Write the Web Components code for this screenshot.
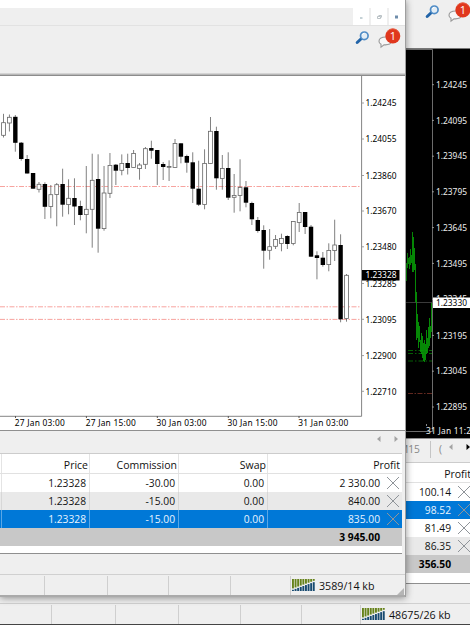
<!DOCTYPE html>
<html lang="en">
<head>
<meta charset="utf-8">
<title>Terminal</title>
<style>
  html, body {
    margin: 0;
    width: 470px;
    height: 625px;
    overflow: hidden;
    background: #efefef;
    font-family: "Open Sans", "Noto Sans", sans-serif;
    font-size: 10.25px;
    color: #111;
  }
</style>
</head>
<body>
<trade-desktop></trade-desktop>

<script>
class TradeDesktop extends HTMLElement {
  constructor() {
    super();
    this.attachShadow({ mode: 'open' }).innerHTML = `
      <style>
        :host {
          display: block;
          position: relative;
          width: 470px;
          height: 625px;
          overflow: hidden;
        }
        terminal-window { position: absolute; top: 0; left: 0; }
        .back { width: 470px; height: 625px; }
        .front {
          width: 406px;
          height: 597px;
          box-shadow: 0 1px 7px rgba(0, 0, 0, .42);
        }
        .shift { margin-left: 406px; }
        .tools { display: flex; justify-content: flex-end; }
        .front .tools { height: 47px; padding: 1px 4px 0 0; box-sizing: border-box; }
        .back .tools { height: 48px; margin-right: -66px; padding-right: 66px; }
        .edge { height: 3px; background: linear-gradient(#d4d4d4 33%, #b8b8b8 33% 66%, #8c8c8c 66%); }
        .back .edge { height: 1px; background: #777; }
        .pane { border: solid #ccc; border-width: 1px 0 0; background: #fff; }
        .front .pane { margin-right: 3px; height: 99px; border-bottom: 1px solid #8f8f8f; }
        .back .pane { height: 120px; border-bottom: 1px solid #8f8f8f; }
        .grow { flex: 1; }
        .grip { position: absolute; right: 1px; bottom: 2px; display: block; }
      </style>
      <terminal-window class="back">
        <div class="tools"><tool-icons style="margin: 1px -1px 0 0"></tool-icons></div>
        <div class="edge"></div>
        <mini-chart class="shift"></mini-chart>
        <tab-strip class="shift" kind="dark"></tab-strip>
        <div class="pane shift">
          <trade-row kind="head" narrow cells="Profit"></trade-row>
          <trade-row narrow closable cells="100.14"></trade-row>
          <trade-row kind="selected" narrow closable cells="98.52"></trade-row>
          <trade-row narrow closable cells="81.49"></trade-row>
          <trade-row kind="alt" narrow closable cells="86.35"></trade-row>
          <trade-row kind="total" narrow cells="356.50"></trade-row>
        </div>
        <div class="grow"></div>
        <status-bar stops="52,64,63,62,61,59" style="border-bottom: 1px solid #444">48675/26 kb</status-bar>
      </terminal-window>
      <terminal-window class="front">
        <title-bar></title-bar>
        <div class="tools"><tool-icons></tool-icons></div>
        <div class="edge"></div>
        <candle-chart></candle-chart>
        <tab-strip></tab-strip>
        <div class="pane">
          <trade-row kind="head" cells="Price|Commission|Swap|Profit"></trade-row>
          <trade-row closable cells="1.23328|-30.00|0.00|2 330.00"></trade-row>
          <trade-row kind="alt" closable cells="1.23328|-15.00|0.00|840.00"></trade-row>
          <trade-row kind="selected" closable cells="1.23328|-15.00|0.00|835.00"></trade-row>
          <trade-row kind="total" cells="|||3 945.00"></trade-row>
        </div>
        <div class="grow"></div>
        <status-bar stops="45,63,61,62,60" style="border-bottom: 2px solid #aaa">3589/14 kb</status-bar>
        <svg class="grip" width="7" height="7"><path d="M7 0V7H0z" fill="#b5b5b5"/></svg>
      </terminal-window>`;
  }
}

class TerminalWindow extends HTMLElement {
  constructor() {
    super();
    this.attachShadow({ mode: 'open' }).innerHTML = `
      <style>
        :host {
          display: flex;
          flex-direction: column;
          background: #efefef;
          box-sizing: border-box;
        }
        :host(.front) { border-right: 1px solid #9f9f9f; }
      </style>
      <slot></slot>`;
  }
}

class TitleBar extends HTMLElement {
  constructor() {
    super();
    this.attachShadow({ mode: 'open' }).innerHTML = `
      <style>
        :host {
          display: flex;
          justify-content: flex-end;
          gap: 2px;
          height: 17px;
          border-top: 8px solid #fff;
          border-bottom: 1px solid #e2e2e2;
        }
        span { width: 16px; background: #fff; }
        svg { display: block; }
      </style>
      <span><svg width="16" height="17"><path d="M7 10h2.5" stroke="#8ba4ad"/></svg></span>
      <span><svg width="16" height="17"><path d="M6.5 8.5h3v2h-3zM7.5 7.5h3v2" fill="none" stroke="#a9b3b8" stroke-width=".8"/></svg></span>
      <span><svg width="16" height="17"><path d="M6 7.5h3v3h-3z" fill="#6f8dab"/></svg></span>`;
  }
}

class ToolIcons extends HTMLElement {
  constructor() {
    super();
    this.attachShadow({ mode: 'open' }).innerHTML = `
      <style>
        :host { display: block; width: 46px; height: 22px; }
        svg { display: block; overflow: visible; }
        text { font: 11px "Open Sans", sans-serif; fill: #fff; }
      </style>
      <svg width="46" height="22">
        <path d="M7 11L2.2 15.5" stroke="#2264a8" stroke-width="3" stroke-linecap="round"/>
        <circle cx="9.3" cy="8.8" r="3.8" fill="#e3edf5" stroke="#4f8cc6" stroke-width="1.7"/>
        <path d="M7 8q.6-1.6 2.3-1.7" fill="none" stroke="#fff"/>
        <path d="M31 10c-4 0-7 1.6-7 4.2 0 1.5.8 2.5 2 3l0 3 3-2.4c5 .3 7.5-1 7.5-3.6" fill="#f7f7f7" stroke="#999" stroke-width="1.1"/>
        <circle cx="37.8" cy="9" r="7.5" fill="#e0371d"/>
        <path d="M31.6 5.5a7 7 0 0 1 12.4 0" fill="none" stroke="#e96a50" stroke-width=".8"/>
        <text x="37.8" y="13" text-anchor="middle">1</text>
      </svg>`;
  }
}

class TabStrip extends HTMLElement {
  constructor() {
    super();
    const dark = this.getAttribute('kind') === 'dark';
    this.attachShadow({ mode: 'open' }).innerHTML = `
      <style>
        :host {
          display: flex;
          align-items: center;
          height: ${dark ? 24 : 23}px;
          padding-right: ${dark ? 0 : 5}px;
          box-sizing: border-box;
          border-top: 1px solid #8f8f8f;
          overflow: hidden;
          color: #888;
          justify-content: flex-end;
        }
        .tab { flex: 1; height: 17px; line-height: 16px; margin: 0 0 3px -7px; border-right: 1px solid #c5c5c5; }
        .next { width: 17px; height: 17px; line-height: 14px; padding-left: 8px; box-sizing: border-box; overflow: hidden; }
        svg { display: block; margin-top: -7px; }
      </style>
      ${dark ? '<span class="tab">M15</span><span class="next">(</span>' : ''}
      <svg width="${dark ? 22 : 24}" height="8">
        <path d="M4.5 1v6L1 4z" fill="#a3a3a3"/>
        <path d="M18.5 1v6L22 4z" fill="${dark ? '#000' : '#a3a3a3'}"/>
      </svg>`;
  }
}

class TradeRow extends HTMLElement {
  constructor() {
    super();
    const kind = this.getAttribute('kind') || '';
    const narrow = this.hasAttribute('narrow');
    const cells = this.getAttribute('cells').split('|');
    const cross = '<svg width="14" height="14"><path d="M1 1l12 12M13 1L1 13" stroke="#8f9499" fill="none"/></svg>';
    this.attachShadow({ mode: 'open' }).innerHTML = `
      <style>
        :host {
          display: grid;
          grid-template-columns: ${narrow ? '1fr' : '2px 88px 89px 89px 1fr'};
          height: 18px;
          line-height: 18px;
          background: #fff;
          color: #111;
          --rule: #e4e4e4;
          overflow: hidden;
        }
        :host([kind=head]) {
          height: 20px;
          line-height: 22px;
          box-sizing: border-box;
          border-bottom: 1px solid #e1e1e1;
          font-size: 10.5px;
        }
        :host([kind=alt]) { background: #e9e9e9; --rule: #d7d7d7; }
        :host([kind=selected]) { background: #0078d7; color: #e9f4ff; --rule: #5aa7e6; }
        :host([kind=total]) { background: #c8c8c8; font-weight: 700; color: #000; --rule: transparent; }
        div {
          display: flex;
          justify-content: flex-end;
          padding-right: 3px;
          border-right: 1px solid var(--rule);
          white-space: pre;
        }
        :host([kind=head]) div { padding-right: 1px; }
        .first { padding: 0; }
        div:last-child { border: 0; padding-right: ${narrow ? 19 : 22}px; }
        :host([kind=head]) div:last-child { padding-right: ${narrow ? 0 : 2}px; margin-right: ${narrow ? -1 : 0}px; }
        :host([closable]) div:last-child { padding-right: ${narrow ? 0 : 2}px; margin-right: ${narrow ? -1 : 0}px; gap: 6px; align-items: center; }
      </style>
      ${narrow ? '' : '<div class="first"></div>'}
      ${cells.map((text, i) => `<div><span>${text}</span>${i === cells.length - 1 && this.hasAttribute('closable') ? cross : ''}</div>`).join('')}`;
  }
}

class StatusBar extends HTMLElement {
  constructor() {
    super();
    const stops = this.getAttribute('stops').split(',');
    this.attachShadow({ mode: 'open' }).innerHTML = `
      <style>
        :host {
          display: flex;
          height: 19px;
          padding-top: 1px;
          border-top: 1px solid #d0d0d0;
          line-height: 21px;
          font-size: 10.7px;
        }
        i { border-right: 1px solid #cfcfcf; box-sizing: border-box; }
        traffic-meter { margin: 3px 4px 0 1px; }
      </style>
      ${stops.map(w => `<i style="width: ${w}px"></i>`).join('')}
      <traffic-meter></traffic-meter>
      <slot></slot>`;
  }
}

class TrafficMeter extends HTMLElement {
  constructor() {
    super();
    let bars = '';
    for (let i = 0; i < 9; i++) {
      const x = i * 2.6;
      const split = 9.8 - i * 0.95;
      bars += `<rect x="${x}" y="0" width="1.9" height="${split - .4}" fill="#66821a"/>`;
      bars += `<rect x="${x}" y="${split + 1}" width="1.9" height="${11 - split}" fill="#174a70"/>`;
    }
    this.attachShadow({ mode: 'open' }).innerHTML = `
      <style>:host, svg { display: block; }</style>
      <svg width="23" height="12">${bars}</svg>`;
  }
}

// high, body top, body bottom, low, 1 for a falling candle
const CANDLES = [
  [113.8, 122.7, 135.3, 137.5, 0], [114.5, 117.3, 123, 131.5, 0], [115, 116.8, 142.8, 151.7, 1],
  [142, 142.7, 159, 160.7, 1], [155, 159, 173.5, 173.5, 1], [173, 173, 188.7, 188.7, 1],
  [182, 184.3, 189.3, 192.5, 0], [182.3, 184, 206.8, 219, 1], [185, 194.7, 206.5, 218.3, 0],
  [183, 184.7, 194.6, 226.3, 0], [168.7, 184, 204.7, 216.7, 1], [179.3, 198.3, 204.6, 214.3, 0],
  [178.3, 198, 206.5, 225, 1], [200.7, 206, 215, 220.3, 1], [166, 209.3, 214.6, 233.3, 0],
  [153.7, 180.3, 209.3, 247.7, 0], [154.3, 179, 228.7, 252.7, 1], [166, 193, 228.6, 230.7, 0],
  [153, 165.4, 193.3, 198, 0], [164, 164.7, 170.7, 185, 1], [154.4, 163.4, 170.3, 175.3, 0],
  [153.7, 163, 168, 174.5, 1], [150, 153.4, 167.6, 167.7, 0], [163, 165, 168.6, 179.7, 0],
  [147, 148.7, 164.3, 169, 0], [140.7, 148, 150.7, 158.7, 1], [150, 150, 164, 185, 1],
  [162, 164, 167, 180, 1], [160.3, 166.5, 167.3, 181, 0], [139, 143.4, 167.6, 167.7, 0],
  [143.3, 143.3, 156.7, 163.3, 1], [154.7, 156, 162.7, 172.7, 1], [152.3, 162.3, 188.7, 203, 1],
  [160.7, 188.7, 204.7, 206, 1], [149.3, 163.4, 204.6, 209.3, 0], [117, 131.3, 163.4, 163.4, 0],
  [126.7, 131, 178.3, 189.7, 1], [155, 168.4, 178.6, 189.7, 0], [152.3, 168, 197.7, 200, 1],
  [174, 195.4, 197.3, 212.7, 0], [159.3, 187.4, 195.6, 211.3, 0], [181, 187.3, 202.7, 207.3, 1],
  [201.7, 203, 219.3, 225, 1], [217, 220, 231, 232.7, 1], [225.3, 230, 250.7, 268.7, 1],
  [229, 246.7, 250.3, 259.7, 0], [235, 239.4, 246.3, 249, 0], [233.7, 238.4, 243.6, 251.3, 0],
  [235.3, 236, 244, 249, 1], [221.3, 221.4, 243.6, 245.3, 0], [203, 212.4, 222.6, 232, 0],
  [212, 212, 227, 234, 1], [225, 226.7, 256.7, 256.7, 1], [251.3, 255.3, 258, 279.3, 1],
  [252, 257.7, 265, 266.7, 1], [243.3, 250.4, 264.6, 271.3, 0], [219.7, 245, 250.6, 261, 0],
  [234.3, 245, 319.3, 322.3, 1], [274, 275.3, 318.6, 321.7, 0],
];

class CandleChart extends HTMLElement {
  constructor() {
    super();
    const candles = CANDLES.map(([high, top, bottom, low, falling], i) => {
      const x = 3.5 + i * 5.914;
      const body = falling
        ? `<rect x="${x - 2.2}" y="${top}" width="4.4" height="${bottom - top}" fill="#000"/>`
        : `<rect x="${x - 1.9}" y="${top}" width="3.8" height="${bottom - top}" fill="#fff" stroke="#666" stroke-width=".8"/>`;
      return `<path d="M${x} ${high}V${low}" stroke="#555" stroke-width=".75"/>` + body;
    }).join('');

    const prices = [
      ['1.24245', 103], ['1.24055', 139], ['1.23860', 175.5], ['1.23670', 211], ['1.23480', 246.8],
      ['1.23285', 283.5], ['1.23095', 319.3], ['1.22900', 355.6], ['1.22710', 391.3],
    ].map(([text, y]) => `
      <path d="M362 ${y}h2" stroke="#888" stroke-width=".8"/>
      <text x="365.5" y="${y + 3.2}" textLength="31">${text}</text>`).join('');

    const times = [
      ['27 Jan 03:00', 14.8], ['27 Jan 15:00', 85.7], ['30 Jan 03:00', 156.6],
      ['30 Jan 15:00', 227.6], ['31 Jan 03:00', 298.3],
    ].map(([text, x]) => `
      <path d="M${x + .7} 416v2" stroke="#555"/>
      <text x="${x}" y="426" textLength="50">${text}</text>`).join('');

    this.attachShadow({ mode: 'open' }).innerHTML = `
      <style>
        :host { display: block; height: 354px; background: #fff; }
        svg { display: block; }
        text { font: 8.4px "Noto Sans", "Open Sans", sans-serif; fill: #000; }
        .level { stroke: #f58b86; stroke-width: .8; stroke-dasharray: 5 1.5 1.5 1.5; }
      </style>
      <svg width="405" height="354" viewBox="0 76 405 354">
        <path class="level" d="M0 186.5H361M0 306.8H361M0 319.4H361"/>
        ${candles}
        <path d="M361.6 76V416.3H0" fill="none" stroke="#777" stroke-width=".9"/>
        ${prices}
        <rect x="362" y="270" width="37.5" height="10.5" fill="#000"/>
        <text x="365.5" y="278.4" textLength="31" style="fill: #fff">1.23328</text>
        ${times}
      </svg>`;
  }
}

// high and low of each bar, one bar per pixel column
const BARS = [
  [263, 281], [253, 268], [258, 264], [257, 269], [249, 265], [255, 263], [232, 272], [237, 272],
  [248, 270], [264, 302], [292, 340], [314, 338], [322, 348], [326, 342], [340, 352], [333, 354],
  [336, 358], [343, 361], [340, 362], [344, 360], [330, 354], [338, 353], [327, 348], [318, 346],
  [326, 338], [303, 332],
];

class MiniChart extends HTMLElement {
  constructor() {
    super();
    const bars = BARS.map(([high, low], i) => `M${406.5 + i} ${high}V${low}`).join('');
    const prices = [
      ['1.24245', 84.7], ['1.24095', 120.4], ['1.23945', 156.2], ['1.23795', 191.8], ['1.23645', 227.6],
      ['1.23495', 263.4], ['1.23345', 299.2], ['1.23195', 335.4], ['1.23045', 371.2], ['1.22895', 407],
    ].map(([text, y]) => `
      <path d="M432 ${y}h2" stroke="#aaa" stroke-width=".8"/>
      <text x="436" y="${y + 3.2}" textLength="31">${text}</text>`).join('');

    this.attachShadow({ mode: 'open' }).innerHTML = `
      <style>
        :host { display: block; height: 389px; background: #000; }
        svg { display: block; }
        text { font: 8.4px "Noto Sans", "Open Sans", sans-serif; fill: #eee; }
      </style>
      <svg width="64" height="389" viewBox="406 49 64 389">
        <path d="M406 302.5H432" stroke="#555" stroke-width=".7"/>
        <path d="M408 350.5H432M408 353.5H432M408 361H432" stroke="#087a08" stroke-width=".8" stroke-dasharray="5 2 1.5 2"/>
        <path d="M408 393.5H432" stroke="#7c3328" stroke-width=".8" stroke-dasharray="5 1.5 1.5 1.5"/>
        <path d="${bars}" stroke="#07a007" stroke-width=".85"/>
        <path d="M406 49.5H432.5V431.5H406" fill="none" stroke="#888" stroke-width=".8"/>
        ${prices}
        <rect x="433" y="297.5" width="37" height="10.5" fill="#fff"/>
        <text x="436" y="306" textLength="31" style="fill: #000">1.23330</text>
        <path d="M426.5 424v2" stroke="#888"/>
        <text x="426" y="434" textLength="50">31 Jan 11:22</text>
      </svg>`;
  }
}

customElements.define('terminal-window', TerminalWindow);
customElements.define('title-bar', TitleBar);
customElements.define('tool-icons', ToolIcons);
customElements.define('candle-chart', CandleChart);
customElements.define('mini-chart', MiniChart);
customElements.define('traffic-meter', TrafficMeter);

// these read their attributes while the desktop's markup is being upgraded
customElements.define('trade-desktop', TradeDesktop);
customElements.define('tab-strip', TabStrip);
customElements.define('trade-row', TradeRow);
customElements.define('status-bar', StatusBar);
</script>
</body>
</html>
